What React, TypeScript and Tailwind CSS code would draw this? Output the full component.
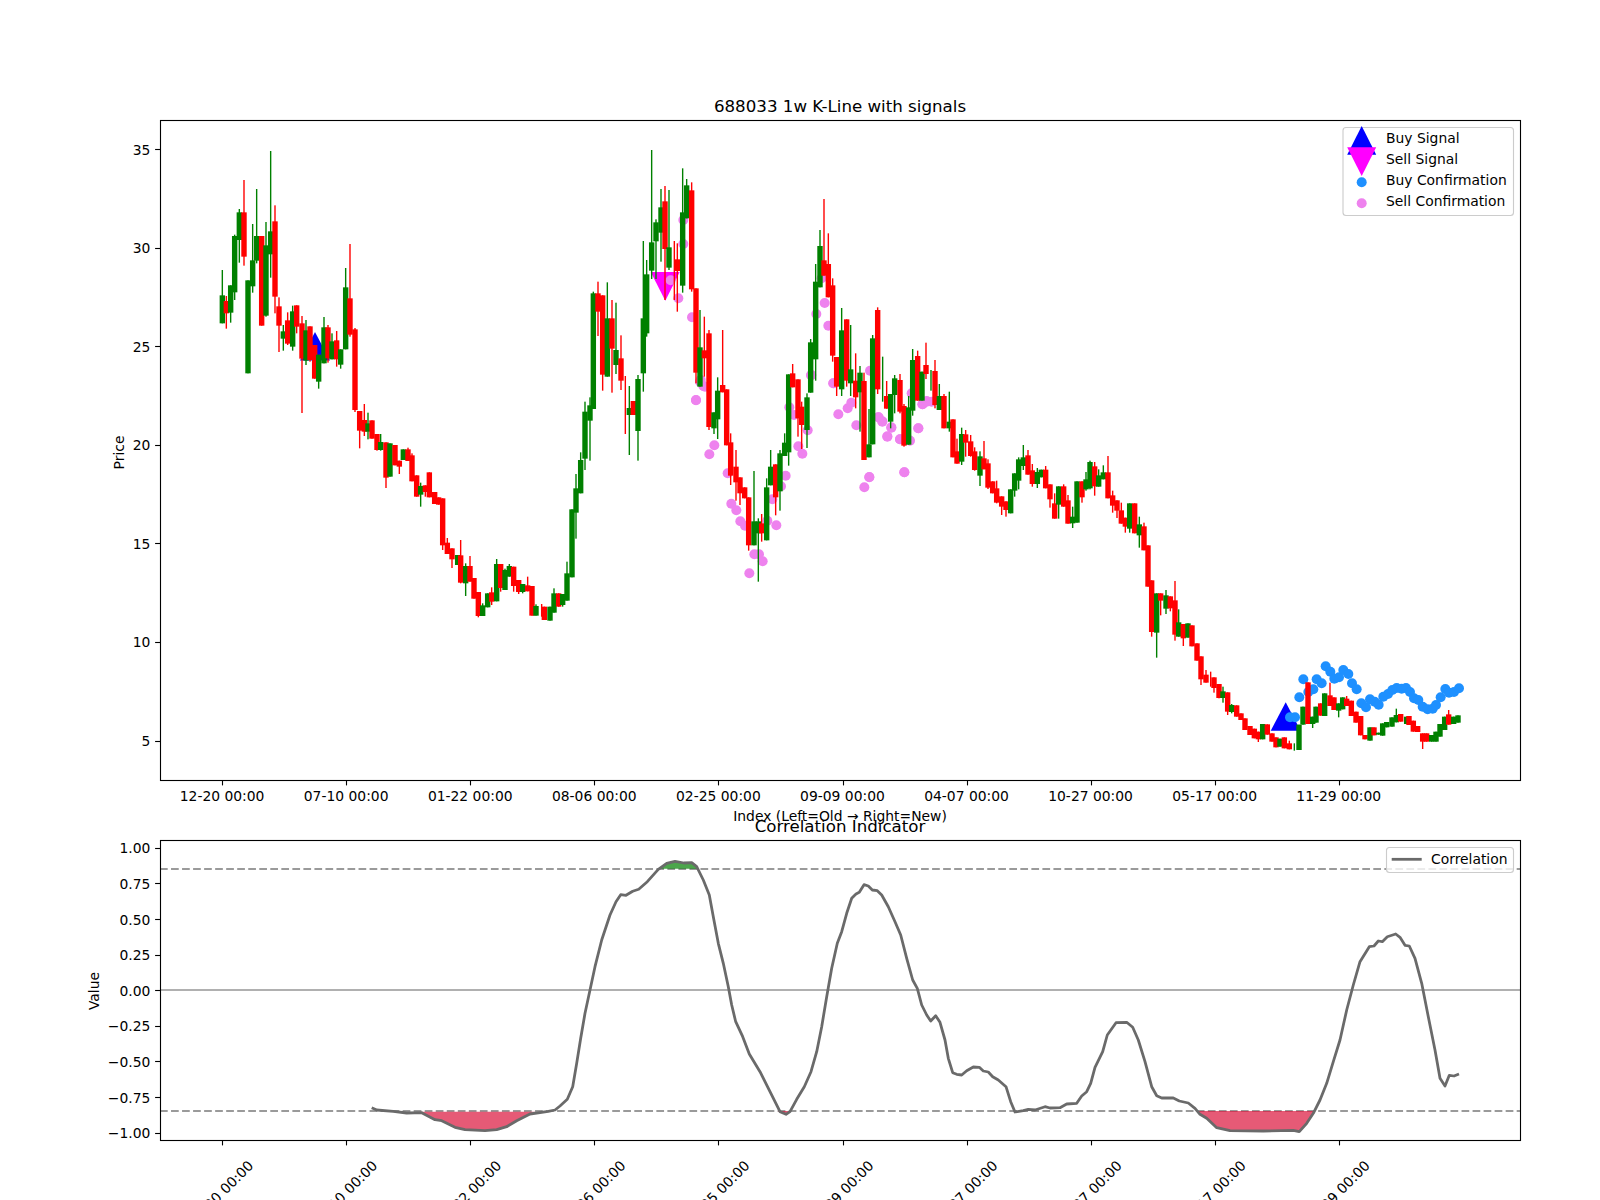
import React from "react";

type Row = number[];
type Candle = { x: number; c: number; bt: number; bb: number; wt: number; wb: number };

const G = 0;
const R = 1;

function region(ox: number, oy: number, rows: Row[]): Candle[] {
  return rows.map(([x, c, bt, bb, wt, wb]) => ({
    x: ox + x / 3,
    c,
    bt: oy + bt / 3,
    bb: oy + bb / 3,
    wt: oy + (wt ?? bt) / 3,
    wb: oy + (wb ?? bb) / 3,
  }));
}

const candles: Candle[] = [
  ...region(160, 100, [
    [187, G, 586, 670, 510, 670], [199, R, 603, 640, 588, 686], [212, G, 556, 638, 556, 668], [224, G, 408, 577, 404, 600],
    [238, G, 337, 420, 327, 488], [252, R, 337, 470, 240, 497], [264, G, 541, 820], [278, G, 481, 559, 372, 578],
    [290, G, 408, 482, 267, 490], [305, R, 408, 677], [318, G, 436, 647, 366, 650], [332, G, 394, 463, 153, 533],
    [345, R, 364, 590, 316, 640], [357, R, 619, 677, 592, 756], [370, G, 694, 716, 675, 752], [383, R, 661, 731, 637, 735],
    [398, G, 634, 740, 617, 752], [410, R, 616, 680, 616, 700], [426, R, 670, 776, 648, 939], [438, G, 691, 782, 660, 795],
    [450, R, 679, 780, 679, 785], [464, R, 735, 836], [476, G, 764, 845, 764, 866], [492, G, 682, 790, 651, 790],
    [504, R, 682, 775, 675, 788], [516, G, 724, 778, 700, 778], [530, R, 721, 778, 693, 800], [542, G, 748, 794, 748, 806],
    [557, G, 562, 748, 504, 748], [570, R, 595, 704, 432, 710], [585, R, 688, 930, 684, 936],
  ]),
  ...region(360, 360, [
    [-1, R, 153, 212, 153, 265], [13, R, 180, 215, 132, 228], [24, G, 190, 215, 158, 238], [36, R, 181, 236],
    [51, R, 222, 270, 222, 272], [62, G, 246, 270, 222, 272], [78, R, 247, 353, 247, 384], [90, G, 250, 350],
    [105, R, 255, 316], [118, R, 302, 320, 302, 342], [130, G, 268, 300], [144, R, 268, 303, 263, 303],
    [156, R, 286, 364, 280, 364], [170, R, 346, 410], [182, G, 378, 404, 368, 440], [196, R, 376, 396, 376, 410],
    [208, R, 337, 412], [224, R, 396, 432], [236, R, 412, 434], [248, R, 415, 556, 415, 570],
    [262, R, 548, 582, 534, 582], [276, R, 565, 598, 565, 624], [293, G, 585, 615], [302, R, 586, 668, 540, 670],
    [317, G, 618, 670, 610, 708], [330, R, 618, 665, 588, 665], [342, R, 654, 716], [355, R, 696, 768, 696, 772],
    [368, G, 736, 768, 730, 768], [383, G, 700, 742], [395, R, 697, 725, 682, 735], [410, G, 612, 724, 597, 724],
    [422, R, 612, 684, 612, 695], [435, G, 630, 690, 626, 690], [448, G, 618, 650, 612, 650], [461, R, 620, 678, 620, 695],
    [476, R, 660, 696, 660, 702], [488, G, 672, 696, 672, 700], [503, R, 676, 694, 650, 694], [516, R, 678, 767],
    [528, G, 738, 767, 733, 767], [545, R, 770, 770, 732, 770], [553, R, 740, 780], [570, G, 740, 782],
    [582, G, 700, 758, 685, 758], [596, R, 700, 740], [608, G, 702, 735, 702, 740], [621, G, 640, 722, 605, 722],
    [636, G, 448, 652], [648, G, 385, 458, 342, 536], [662, G, 300, 400, 277, 400], [675, G, 155, 296, 125, 330],
    [690, G, 136, 182, 112, 302],
  ]),
  ...region(560, 100, [
    [100, G, 580, 927, 575, 927], [114, R, 580, 635, 545, 708], [128, R, 586, 824, 586, 872], [142, G, 655, 830, 547, 830],
    [156, R, 655, 746, 600, 878], [168, G, 750, 795, 608, 822], [183, R, 775, 842, 706, 870], [196, R, 900, 900, 828, 1002],
    [208, G, 924, 945, 858, 1065], [220, R, 903, 945], [234, G, 837, 993, 825, 1082], [250, G, 655, 820, 423, 875],
    [260, G, 523, 700, 480, 710], [275, G, 427, 512, 150, 537], [288, G, 367, 424, 358, 537], [303, G, 322, 398, 267, 485],
    [315, R, 304, 447, 258, 600], [327, G, 442, 503, 270, 510], [343, R, 600, 600, 423, 600], [352, R, 478, 513, 430, 635],
    [368, G, 337, 557, 205, 578], [380, G, 256, 355, 237, 355], [395, R, 271, 568, 247, 575], [408, R, 565, 818, 565, 850],
    [420, G, 742, 860, 630, 860], [433, R, 751, 775, 650, 830], [447, R, 700, 981, 690, 990], [462, G, 937, 985, 937, 1002],
    [473, G, 872, 958, 832, 1017], [488, R, 855, 877, 690, 877], [500, R, 868, 1036], [512, R, 1027, 1127, 1000, 1155],
    [528, R, 1100, 1147, 1050, 1202], [540, R, 1132, 1180, 1132, 1215], [554, R, 1162, 1195], [566, R, 1192, 1336, 1192, 1352],
    [582, G, 1264, 1336, 1113, 1336], [595, G, 1264, 1300, 1255, 1445], [605, R, 1270, 1300, 1242, 1325], [620, G, 1162, 1321, 1135, 1321],
    [632, G, 1100, 1156, 1050, 1156], [647, R, 1093, 1192, 1093, 1246], [660, G, 1060, 1174, 1050, 1232], [674, G, 1028, 1068, 1000, 1068],
    [686, G, 823, 1057, 823, 1097], [698, R, 820, 862, 792, 862], [714, R, 838, 955, 838, 1010], [725, R, 920, 975, 905, 1047],
    [741, G, 892, 990, 880, 1044], [752, G, 727, 878, 717, 878], [767, G, 545, 778, 492, 842], [780, G, 438, 562, 390, 562],
    [792, R, 481, 527, 297, 527], [805, R, 492, 592, 400, 592], [818, R, 556, 767, 535, 785], [830, R, 771, 860, 771, 888],
    [845, G, 691, 868, 624, 888], [860, R, 658, 842, 658, 860], [872, G, 808, 850, 675, 888], [887, R, 842, 892, 760, 925],
  ]),
  ...region(860, 280, [
    [0, G, 278, 337, 258, 455], [12, R, 303, 540, 278, 540], [27, G, 493, 532, 387, 532], [38, G, 175, 493, 165, 493],
    [53, R, 90, 328, 82, 342], [68, G, 365, 365, 230, 365], [80, R, 348, 386, 303, 386], [92, G, 342, 425, 342, 445],
    [104, G, 295, 345, 285, 400], [120, R, 300, 395, 282, 400], [132, R, 378, 497, 372, 500], [146, G, 382, 494, 348, 494],
    [158, G, 240, 392, 207, 407], [173, R, 228, 362, 212, 362], [186, G, 275, 362], [198, R, 255, 282, 188, 297],
    [213, G, 332, 332, 270, 332], [225, R, 273, 375, 240, 385], [238, G, 348, 390, 312, 390], [252, R, 348, 445, 342, 445],
    [268, G, 425, 445, 335, 455], [279, R, 418, 532], [291, R, 514, 551, 476, 551],
  ]),
  ...region(960, 340, [
    [5, G, 282, 365, 263, 375], [17, R, 283, 308, 270, 350], [32, R, 304, 348, 285, 350], [44, R, 334, 390, 322, 392],
    [60, G, 349, 407, 334, 438], [72, R, 355, 388, 303, 388], [84, R, 370, 443, 358, 447], [98, R, 424, 460],
    [110, R, 445, 488, 422, 490], [125, R, 469, 500, 469, 525], [138, R, 484, 510, 484, 530], [152, G, 448, 520],
    [164, G, 400, 452, 400, 470], [176, G, 358, 422, 352, 448], [190, G, 352, 378, 315, 390], [204, R, 346, 404, 330, 404],
    [217, R, 391, 432, 372, 440], [232, G, 396, 432, 384, 444], [244, G, 389, 412], [257, R, 389, 445, 378, 445],
    [270, R, 433, 478, 433, 503], [284, R, 490, 536, 460, 536], [296, G, 439, 494, 439, 536], [311, R, 439, 500, 433, 500],
    [324, R, 481, 551, 465, 551], [338, G, 530, 550, 500, 564], [351, G, 424, 548], [366, R, 424, 472, 424, 488],
    [378, G, 418, 448, 396, 452], [390, G, 366, 445, 362, 448], [404, R, 379, 439, 366, 467], [416, G, 406, 440, 388, 440],
    [430, G, 397, 418, 376, 418], [444, R, 397, 475, 348, 475], [458, R, 466, 497, 452, 518], [471, R, 481, 512, 481, 534],
    [484, R, 511, 551, 488, 551], [496, R, 533, 560, 533, 578], [509, G, 490, 566, 490, 578], [524, R, 490, 580],
    [538, G, 553, 586, 530, 623], [552, R, 559, 631, 548, 631], [564, R, 616, 740], [575, R, 721, 876, 721, 890],
    [590, G, 760, 878, 760, 953], [602, R, 760, 782, 760, 826], [618, G, 766, 806, 750, 822], [631, R, 769, 805, 769, 814],
    [645, R, 781, 884, 723, 902], [656, G, 847, 890, 808, 890], [670, R, 852, 895, 852, 918], [684, G, 850, 893],
    [696, R, 856, 919], [711, R, 910, 962], [723, R, 949, 1018, 949, 1035], [738, R, 1004, 1028, 990, 1028],
    [752, R, 1040, 1040, 995, 1040], [762, R, 1012, 1044, 1012, 1058], [777, R, 1032, 1074, 1032, 1075], [789, G, 1054, 1074, 1040, 1088],
    [803, R, 1057, 1115, 1057, 1125], [815, G, 1095, 1116, 1092, 1120], [830, R, 1096, 1130], [843, R, 1120, 1140],
  ]),
  ...region(1150, 600, [
    [285, R, 355, 390], [300, R, 378, 405], [313, R, 386, 415], [325, R, 395, 418, 395, 426],
    [338, G, 372, 418], [352, R, 373, 404], [366, R, 400, 425], [378, R, 412, 442],
    [390, G, 416, 440], [403, R, 412, 445], [418, R, 430, 448, 422, 448], [433, G, 452, 452, 430, 452],
    [447, G, 374, 450], [459, G, 320, 374], [474, R, 247, 372], [488, G, 350, 372, 350, 384],
    [498, G, 320, 368], [512, R, 310, 347], [524, G, 280, 348], [540, R, 286, 318, 248, 318],
    [552, R, 292, 330], [566, G, 310, 332, 310, 352], [578, G, 292, 328], [590, R, 296, 318, 288, 318],
    [604, R, 302, 348], [618, R, 335, 368], [632, R, 348, 406], [645, R, 405, 418],
    [660, G, 382, 422], [672, R, 382, 406], [686, G, 398, 404], [698, G, 370, 407],
    [710, G, 366, 382], [726, G, 352, 380], [739, G, 345, 367, 326, 367], [752, R, 342, 365],
    [770, G, 350, 372], [777, R, 348, 375], [790, R, 362, 395], [803, R, 378, 396],
    [818, R, 400, 425, 400, 447], [830, R, 400, 425], [845, G, 405, 425], [858, G, 395, 425],
    [870, G, 372, 410], [884, G, 350, 390], [896, R, 343, 374, 330, 374], [911, G, 350, 372],
    [924, G, 346, 368],
  ]),
];

const pts = (ox: number, oy: number, list: number[][]) => list.map(([x, y]) => [ox + x / 3, oy + y / 3]);

const sellDots = [
  ...pts(660, 360, [[108,121],[135,80],[163,256],[148,283],[120,65],[203,340],[214,431],[229,451],[241,484],[255,497],[283,583],[297,583],[308,604],[268,640],[349,496],[377,347],[363,379],[337,418],[322,482],[415,259],[427,281],[443,211],[388,142],[402,165],[453,46],[520,70],[535,163],[563,145],[574,128],[589,196],[656,172],[667,184],[694,203],[682,230],[720,238],[748,241],[775,205],[733,337],[628,352],[613,382],[757,100],[788,133],[800,125],[637,33]]),
  ...pts(560, 100, [[332,541],[355,595],[396,652],[422,840],[430,858],[408,900],[754,825],[820,850],[805,677],[769,642],[794,609],[785,535],[370,360],[370,432]]),
  ...pts(860, 280, [[30,272],[155,340],[55,412],[67,425],[94,442],[82,469],[120,478],[150,482],[175,445],[133,577],[28,591],[187,373],[200,363],[215,365]]),
];

const buyDots = pts(1150, 600, [[420,352],[435,352],[448,292],[460,238],[475,276],[490,268],[500,238],[515,250],[527,199],[541,215],[553,236],[567,232],[580,210],[595,222],[606,250],[620,268],[634,310],[648,322],[660,298],[674,305],[686,314],[700,290],[714,282],[727,270],[740,264],[755,266],[768,264],[780,276],[792,295],[805,300],[818,320],[833,328],[848,326],[858,315],[872,292],[886,267],[897,278],[912,276],[927,265]]);

const corrLeft = pts(60, 780, [[935,983],[950,990],[1000,994],[1040,999],[1085,998],[1125,1019],[1145,1022],[1185,1042],[1215,1049],[1275,1052],[1310,1049],[1340,1040],[1370,1022],[1410,1002],[1465,994],[1485,990]]);
const corrMid = pts(560, 830, [[0,828],[22,808],[38,770],[50,700],[62,625],[75,550],[90,480],[105,410],[125,330],[150,255],[168,215],[182,194],[198,196],[218,184],[236,178],[262,155],[295,118],[320,100],[345,94],[372,99],[395,98],[410,110],[430,150],[448,195],[460,260],[475,340],[490,400],[505,470],[515,525],[527,575],[548,620],[568,672],[600,725],[630,785],[660,845],[678,853],[690,845],[710,808],[733,770],[753,725],[770,665],[785,590],[800,500],[815,415],[832,340],[845,305],[860,250],[875,205],[888,192],[898,187],[912,164],[925,168],[937,180],[952,182],[965,195],[985,230],[1005,275],[1022,315],[1040,385],[1058,450],[1072,475],[1085,525],[1100,555],[1112,573],[1127,557],[1140,577],[1155,630],[1165,685],[1178,728],[1190,733],[1205,735],[1220,722],[1240,711],[1258,712],[1270,723],[1285,726],[1298,740],[1315,750],[1338,770],[1352,815],[1365,846],[1390,842],[1405,838],[1425,840],[1455,830],[1470,834]]);
const corrRight = pts(1060, 830, [[0,833],[20,822],[50,820],[65,798],[80,785],[92,760],[105,712],[128,665],[142,615],[168,578],[200,577],[218,592],[235,630],[255,695],[275,770],[290,797],[305,804],[340,804],[358,813],[385,819],[405,835],[420,853],[440,865],[470,893],[510,902],[610,903],[700,901],[718,905],[740,880],[760,850],[780,810],[800,760],[820,695],[840,630],[860,540],[880,465],[900,395],[928,350],[942,348],[955,333],[967,335],[982,320],[1007,312],[1020,322],[1035,346],[1048,348],[1065,385],[1085,460],[1105,560],[1125,660],[1140,745],[1155,768],[1168,736],[1182,738],[1197,732]]);
const corr = [...corrLeft, ...corrMid, ...corrRight];

const toStr = (list: number[][]) => list.map(([x, y]) => `${x.toFixed(1)},${y.toFixed(1)}`).join(" ");

const LOW = 1111;
const HIGH = 869;
const redFills = [
  pts(60, 780, [[1085,995],[1125,1019],[1145,1022],[1185,1042],[1215,1049],[1275,1052],[1310,1049],[1340,1040],[1370,1022],[1410,1002],[1425,995]]),
  pts(560, 830, [[652,843],[660,845],[678,853],[690,845],[692,843]]),
  pts(1060, 830, [[415,843],[420,853],[440,865],[470,893],[510,902],[610,903],[700,901],[718,905],[740,880],[760,850],[764,843]]),
];
const greenFill = pts(560, 830, [[297,116],[320,100],[345,94],[372,99],[395,98],[410,110],[414,116]]);

const xTicks = ["12-20", "07-10", "01-22", "08-06", "02-25", "09-09", "04-07", "10-27", "05-17", "11-29"].map((d, i) => ({
  x: 222.7 + 124.07 * i,
  label: `${d} 00:00`,
}));
const priceTicks = [5, 10, 15, 20, 25, 30, 35].map((v) => ({ y: 741 - (v - 5) * 19.71, label: String(v) }));
const corrTicks = ["1.00", "0.75", "0.50", "0.25", "0.00", "−0.25", "−0.50", "−0.75", "−1.00"].map((label, i) => ({
  y: 848.3 + i * 35.6,
  label,
}));

const snap = (v: number) => Math.floor(v) + 0.5;

function Axes({ top, bottom }: { top: number; bottom: number }) {
  return <rect x={160.5} y={top + 0.5} width={1360} height={bottom - top} fill="none" stroke="#000" strokeWidth={1.11} />;
}

export default function App() {
  return (
    <div className="w-[1600px] h-[1200px] bg-white overflow-hidden">
      <svg
        width={1600}
        height={1200}
        viewBox="0 0 1600 1200"
        className="block font-['DejaVu_Sans',sans-serif] text-[13.89px] fill-black"
      >
        {/* top chart */}
        <polygon points="315,332 300,360.6 330,360.6" fill="#0000ff" />
        <polygon points="1285.7,702.3 1270.7,730.7 1300.7,730.7" fill="#0000ff" />
        <polygon points="650.7,272 679.7,272 665.3,300.7" fill="#ff00ff" />
        {sellDots.map(([x, y], i) => (
          <circle key={i} cx={x} cy={y} r={5} fill="#ee82ee" />
        ))}
        {buyDots.map(([x, y], i) => (
          <circle key={i} cx={x} cy={y} r={5} fill="#1e90ff" />
        ))}
        {candles.map((c, i) => {
          const col = c.c === G ? "#008000" : "#ff0000";
          return (
            <g key={i}>
              <rect x={c.x - 0.7} y={c.wt} width={1.39} height={Math.max(0, c.wb - c.wt)} fill={col} />
              {c.bb > c.bt && <rect x={c.x - 2.7} y={c.bt} width={5.4} height={c.bb - c.bt} fill={col} />}
            </g>
          );
        })}
        <Axes top={120} bottom={780} />
        {priceTicks.map((t) => (
          <g key={t.label}>
            <line x1={155.1} x2={160} y1={snap(t.y)} y2={snap(t.y)} stroke="#000" strokeWidth={1.11} />
            <text x={150.3} y={t.y + 5} textAnchor="end">{t.label}</text>
          </g>
        ))}
        {xTicks.map((t) => (
          <g key={t.label}>
            <line x1={snap(t.x)} x2={snap(t.x)} y1={781} y2={785.4} stroke="#000" strokeWidth={1.11} />
            <text x={t.x - 0.6} y={800.7} textAnchor="middle">{t.label}</text>
          </g>
        ))}
        <text x={840} y={111.7} textAnchor="middle" className="text-[16.67px]">688033 1w K-Line with signals</text>
        <text x={840} y={820.5} textAnchor="middle">Index (Left=Old → Right=New)</text>
        <text transform="translate(124 452.5) rotate(-90)" textAnchor="middle">Price</text>

        {/* top legend */}
        <rect x={1343} y={127.5} width={170.5} height={88} rx={3} fill="#fff" fillOpacity={0.8} stroke="#cccccc" strokeWidth={1.11} />
        <polygon points="1361.7,126 1347.2,154.7 1376.2,154.7" fill="#0000ff" />
        <polygon points="1347.2,147.3 1376.2,147.3 1361.7,176" fill="#ff00ff" />
        <circle cx={1361.7} cy={182.3} r={5} fill="#1e90ff" />
        <circle cx={1361.7} cy={203.3} r={5} fill="#ee82ee" />
        <text x={1386} y={143.3}>Buy Signal</text>
        <text x={1386} y={164.3}>Sell Signal</text>
        <text x={1386} y={185.3}>Buy Confirmation</text>
        <text x={1386} y={206.3}>Sell Confirmation</text>

        {/* bottom chart */}
        <line x1={160} x2={1520} y1={HIGH} y2={HIGH} stroke="#9a9a9a" strokeWidth={2.08} strokeDasharray="7.7 3.33" />
        <line x1={160} x2={1520} y1={LOW} y2={LOW} stroke="#9a9a9a" strokeWidth={2.08} strokeDasharray="7.7 3.33" />
        <line x1={160} x2={1520} y1={990} y2={990} stroke="#b0b0b0" strokeWidth={2.08} />
        {redFills.map((f, i) => (
          <polygon key={i} points={toStr(f)} fill="#dc143c" fillOpacity={0.7} />
        ))}
        <polygon points={toStr(greenFill)} fill="#008000" fillOpacity={0.7} />
        <polyline points={toStr(corr)} fill="none" stroke="#6a6a6a" strokeWidth={2.78} strokeLinejoin="round" />
        <Axes top={840} bottom={1140} />
        {corrTicks.map((t) => (
          <g key={t.label}>
            <line x1={155.1} x2={160} y1={snap(t.y)} y2={snap(t.y)} stroke="#000" strokeWidth={1.11} />
            <text x={150.3} y={t.y + 5} textAnchor="end">{t.label}</text>
          </g>
        ))}
        {xTicks.map((t) => (
          <g key={t.label}>
            <line x1={snap(t.x)} x2={snap(t.x)} y1={1141} y2={1145.4} stroke="#000" strokeWidth={1.11} />
            <text transform={`translate(${t.x - 2} 1193) rotate(-45)`} y={5} textAnchor="middle">{t.label}</text>
          </g>
        ))}
        <text x={840} y={831.7} textAnchor="middle" className="text-[16.67px]">Correlation Indicator</text>
        <text transform="translate(98.5 991) rotate(-90)" textAnchor="middle">Value</text>

        {/* bottom legend */}
        <rect x={1386.5} y={847.5} width={127} height={25} rx={3} fill="#fff" fillOpacity={0.8} stroke="#cccccc" strokeWidth={1.11} />
        <line x1={1391.7} x2={1421.7} y1={859.3} y2={859.3} stroke="#6a6a6a" strokeWidth={2.78} />
        <text x={1431} y={864.3}>Correlation</text>
      </svg>
    </div>
  );
}
